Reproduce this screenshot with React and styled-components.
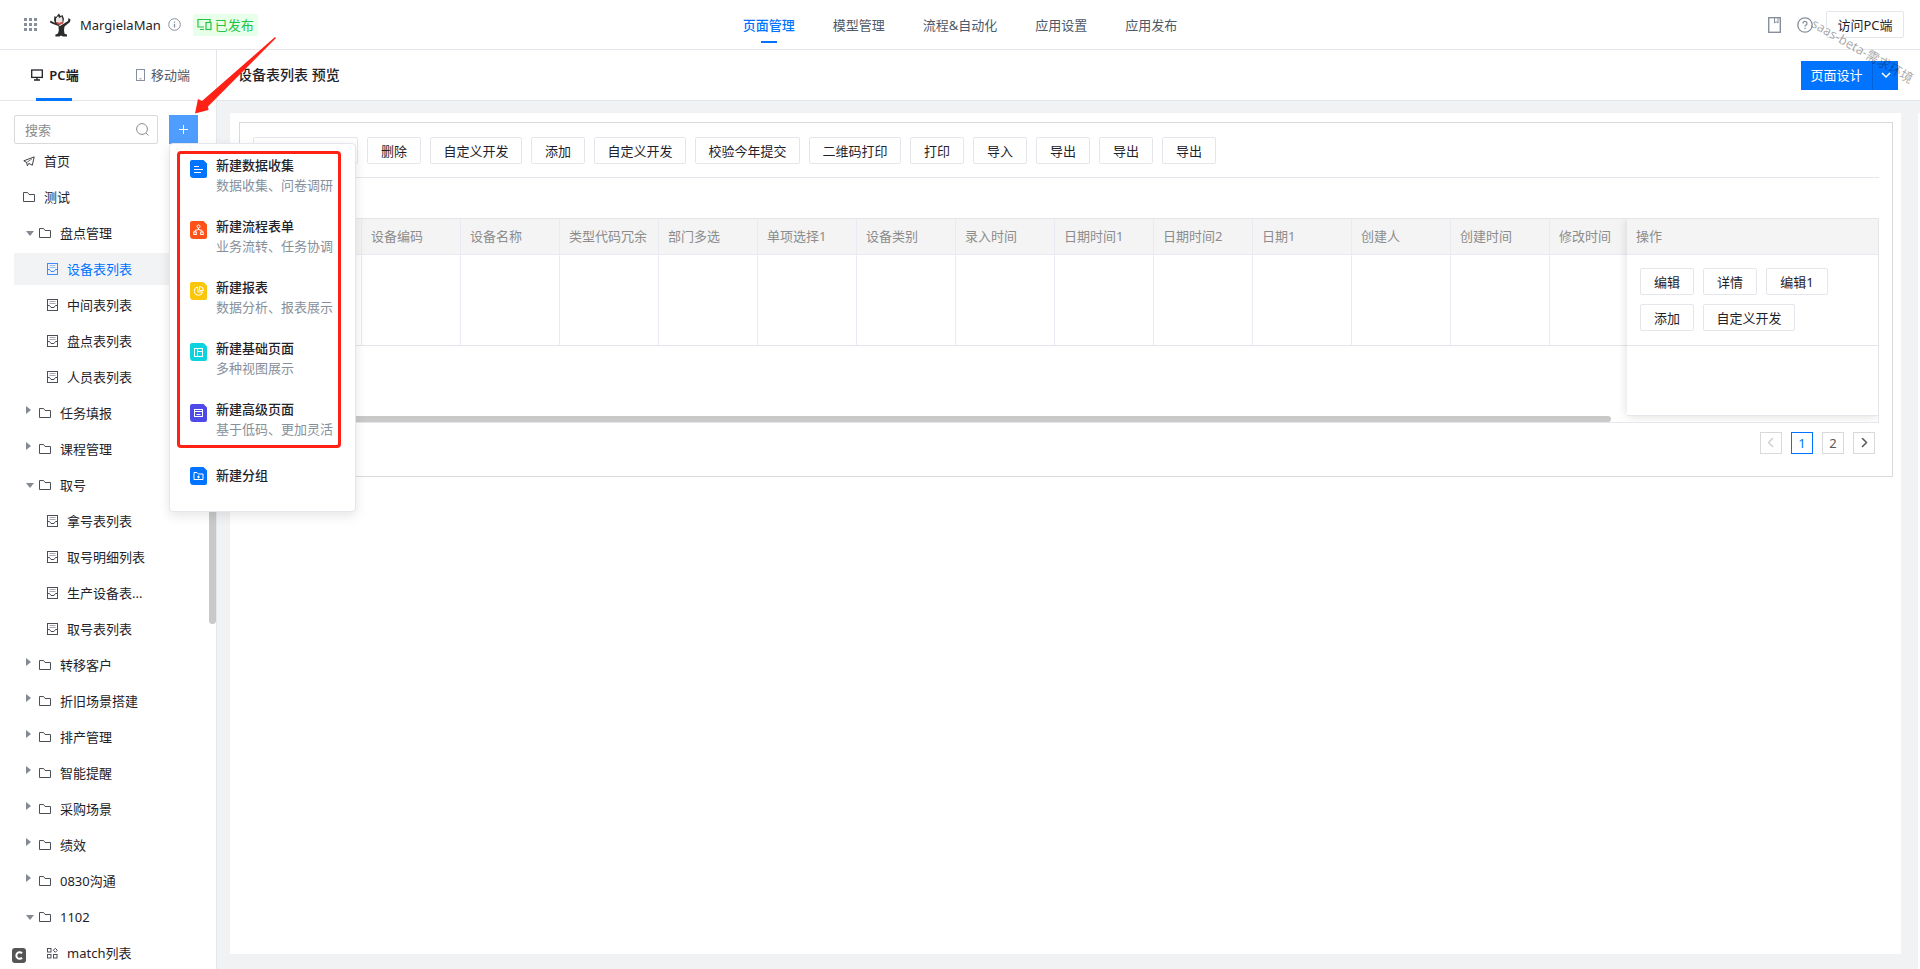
import React from 'react';
import styled, { createGlobalStyle, css } from 'styled-components';

const Global = createGlobalStyle`
  *, *::before, *::after { box-sizing: border-box; }
  body { margin: 0; }
  body, button, input {
    font-family: "Noto Sans", "Noto Sans CJK SC", sans-serif;
    font-size: 13px;
    line-height: 20px;
    color: #1f2329;
  }
  button { padding: 0; border: 0; background: none; cursor: pointer; }
  svg { display: block; flex: none; }
`;

const Page = styled.div`
  position: relative;
  display: flex;
  flex-direction: column;
  height: 100vh;
  overflow: hidden;
  background: #fff;
`;

/* top bar */
const Header = styled.header`
  display: grid;
  grid-template-columns: 1fr auto 1fr;
  flex: none;
  height: 50px;
  padding: 0 16px;
  border-bottom: 1px solid #e5e6eb;
`;
const Brand = styled.div`
  display: flex;
  align-items: center;
  padding-left: 8px;
`;
const LogoSlot = styled.span`
  margin-left: 13px;
`;
const AppName = styled.span`
  margin: 0 7px 0 9px;
`;
const Status = styled.span`
  display: flex;
  align-items: center;
  gap: 3px;
  height: 22px;
  margin-left: 12px;
  padding: 0 4px;
  border-radius: 2px;
  background: #e8ffea;
  color: #23c343;
`;
const Nav = styled.nav`
  display: flex;
  gap: 38px;
`;
const NavLink = styled.a`
  display: flex;
  flex-direction: column;
  align-items: center;
  padding-top: 15px;
  color: ${p => (p.$active ? '#0074ff' : '#4e5969')};
  font-weight: ${p => (p.$active ? 500 : 400)};
  text-decoration: none;
  ${p => p.$active && css`
    &::after { content: ''; width: 16px; height: 2px; margin-top: 6px; background: #0074ff; }
  `}
`;
const Actions = styled.div`
  display: flex;
  align-items: center;
  justify-content: flex-end;
`;
const IconButton = styled.button`
  margin-right: ${p => p.$gap}px;
`;
const Outline = styled.button`
  width: ${p => p.$w || 54}px;
  height: 27px;
  flex: none;
  border: 1px solid #e5e6eb;
  border-radius: 2px;
  background: #fff;
  white-space: nowrap;
`;
const Watermark = styled.span`
  position: absolute;
  top: 12px;
  left: calc(100% - 107px);
  transform: rotate(30deg);
  transform-origin: 0 50%;
  color: rgba(0, 0, 0, 0.36);
  white-space: nowrap;
  pointer-events: none;
`;

const Body = styled.div`
  display: flex;
  flex: 1;
  min-height: 0;
`;

/* side bar */
const Sidebar = styled.aside`
  position: relative;
  display: flex;
  flex-direction: column;
  flex: none;
  width: 217px;
  border-right: 1px solid #e5e6eb;
`;
const Tabs = styled.div`
  display: grid;
  grid-template-columns: 1fr 1fr;
  flex: none;
  height: 51px;
  border-bottom: 1px solid #e5e6eb;
`;
const Tab = styled.button`
  position: relative;
  display: flex;
  align-items: center;
  justify-content: center;
  gap: 6px;
  padding: 0 0 1px 2px;
  color: ${p => (p.$active ? '#1f2329' : '#4e5969')};
  font-weight: ${p => (p.$active ? 600 : 400)};
  ${p => p.$active && css`
    &::after { content: ''; position: absolute; left: 36px; bottom: -1px; width: 36px; height: 3px; background: #0074ff; }
  `}
`;
const Tools = styled.div`
  display: flex;
  gap: 11px;
  flex: none;
  padding: 14px 18px 1px 14px;
`;
const SearchBox = styled.label`
  display: flex;
  align-items: center;
  flex: 1;
  min-width: 0;
  height: 29px;
  padding: 0 8px 0 10px;
  border: 1px solid #d9d9d9;
  border-radius: 2px;
`;
const SearchInput = styled.input`
  flex: 1;
  min-width: 0;
  padding: 0;
  border: 0;
  outline: 0;
  &::placeholder { color: #8c8c8c; opacity: 1; }
`;
const AddButton = styled.button`
  display: flex;
  align-items: center;
  justify-content: center;
  width: 29px;
  height: 29px;
  background: #4e9dff;
`;
const Tree = styled.ul`
  display: flex;
  flex-direction: column;
  gap: 4px;
  flex: 1;
  min-height: 0;
  margin: 0;
  padding: 0 14px;
  overflow: hidden;
  list-style: none;
`;
const TreeLink = styled.a`
  display: flex;
  align-items: center;
  height: 32px;
  padding-left: ${p => [9, 12, 33][p.$level]}px;
  background: ${p => (p.$active ? '#f2f3f5' : 'none')};
  color: ${p => (p.$active ? '#0074ff' : '#1f2329')};
  text-decoration: none;
`;
const Caret = styled.i`
  width: 0;
  height: 0;
  flex: none;
  ${p => p.$open
    ? 'border: 4px solid transparent; border-top: 5px solid #858a92; border-bottom: 0; margin-right: 5px;'
    : 'border: 4px solid transparent; border-left: 5px solid #858a92; border-right: 0; margin: 0 8px 6px 0;'}
`;
const TreeText = styled.span`
  margin-left: 9px;
`;
const SideThumb = styled.div`
  position: absolute;
  top: 96px;
  right: 0;
  width: 7px;
  height: 478px;
  border-radius: 4px;
  background: #c9c9c9;
`;
const Badge = styled.div`
  position: absolute;
  left: 12px;
  bottom: 6px;
`;

/* drop-down under the add button */
const Menu = styled.div`
  position: absolute;
  top: 143px;
  left: 169px;
  z-index: 2;
  width: 187px;
  height: 369px;
  padding: 11px 0 0 20px;
  border: 1px solid #e5e6eb;
  border-radius: 4px;
  background: #fff;
  box-shadow: 0 4px 12px rgba(0, 0, 0, 0.1);
`;
const MenuItem = styled.button`
  display: flex;
  gap: 9px;
  height: ${p => (p.$single ? 32 : 61)}px;
  margin-top: ${p => (p.$single ? 5 : 0)}px;
  text-align: left;
  white-space: nowrap;
`;
const MenuIcon = styled.span`
  padding-top: ${p => (p.$single ? 2 : 5)}px;
`;
const MenuTitle = styled.span`
  display: block;
  font-weight: 500;
`;
const MenuNote = styled.span`
  display: block;
  color: #86909c;
`;
const Highlight = styled.div`
  position: absolute;
  top: 7px;
  left: 7px;
  width: 164px;
  height: 297px;
  border: 3px solid #ff2116;
  border-radius: 4px;
  pointer-events: none;
`;
const Arrow = styled.svg`
  position: absolute;
  top: 36px;
  left: 190px;
  z-index: 3;
  pointer-events: none;
`;

/* main area */
const Main = styled.main`
  display: flex;
  flex-direction: column;
  flex: 1;
  min-width: 0;
`;
const TitleBar = styled.div`
  display: flex;
  align-items: center;
  justify-content: space-between;
  flex: none;
  height: 51px;
  padding: 0 22px 0 21px;
  border-bottom: 1px solid #e5e6eb;
`;
const Title = styled.h1`
  margin: 0;
  font-size: 14px;
  font-weight: 500;
`;
const Split = styled.div`
  display: flex;
  height: 29px;
`;
const Primary = styled.button`
  display: flex;
  align-items: center;
  justify-content: center;
  width: ${p => p.$w}px;
  background: #0074ff;
  color: #fff;
  & + & { border-left: 1px solid #0062d9; }
`;
const Canvas = styled.div`
  display: flex;
  gap: 17px;
  flex: 1;
  padding: 12px 0 15px 13px;
  background: #f1f2f4;
`;
const Panel = styled.section`
  flex: 1;
  min-width: 0;
  padding: 9px 8px 9px 9px;
  background: #fff;
`;
const Edge = styled.div`
  width: 2px;
  margin-bottom: -15px;
  background: #fff;
`;
const Frame = styled.div`
  padding: 14px 13px 22px;
  border: 1px solid #d9d9d9;
`;
const Toolbar = styled.div`
  display: flex;
  gap: 9px;
  margin-bottom: 40px;
  padding-bottom: 13px;
  border-bottom: 1px solid #e5e6eb;
`;
const Grid = styled.div`
  position: relative;
  display: flex;
  height: 205px;
  border: 1px solid #e5e6eb;
  overflow: hidden;
`;
const Scroller = styled.div`
  flex: 1;
  min-width: 0;
  overflow: hidden;
`;
const Fixed = styled.div`
  position: relative;
  flex: none;
  width: 251px;
  height: 197px;
  background: #fff;
  border-bottom: 1px solid #e5e6eb;
  box-shadow: 0 0 10px rgba(0, 0, 0, 0.14);
`;
const Table = styled.table`
  width: ${p => p.$w};
  table-layout: fixed;
  border-collapse: separate;
  border-spacing: 0;
`;
const Th = styled.th`
  width: ${p => p.$w || 99}px;
  height: 36px;
  padding: 0 9px 1px;
  border-bottom: 1px solid #e9eaf2;
  border-right: ${p => (p.$last ? 0 : 1)}px solid #e9eaf2;
  background: #f4f4f4;
  color: #8c8c8c;
  font-weight: 400;
  text-align: left;
  white-space: nowrap;
`;
const Td = styled.td`
  height: 91px;
  padding: 13px 13px 0;
  border-bottom: 1px solid #e5e6eb;
  border-right: ${p => (p.$last ? 0 : 1)}px solid #e9eaf2;
  vertical-align: top;
`;
const RowActions = styled.div`
  display: flex;
  flex-wrap: wrap;
  gap: 9px;
`;
const ScrollThumb = styled.div`
  position: absolute;
  left: 0;
  right: 267px;
  bottom: 0;
  height: 6px;
  border-radius: 3px;
  background: #c9c9c9;
`;
const Pager = styled.nav`
  display: flex;
  justify-content: flex-end;
  gap: 9px;
  padding: 9px 4px 0 0;
`;
const PageButton = styled.button`
  display: flex;
  align-items: center;
  justify-content: center;
  width: 22px;
  height: 22px;
  border: 1px solid ${p => (p.$active ? '#0074ff' : '#d9d9d9')};
  color: ${p => (p.$active ? '#0074ff' : '#595959')};
`;

/* icons */
const Line = ({ w, h, children, color = 'currentColor', sw = 1 }) => (
  <svg width={w} height={h} viewBox={`0 0 ${w} ${h}`} fill="none" stroke={color} strokeWidth={sw}>{children}</svg>
);
const AppsIcon = () => (
  <svg width="13" height="13" fill="#86909c">
    {[0, 5, 10].map(y => [0, 5, 10].map(x => <rect key={x + '-' + y} x={x} y={y} width="3" height="3" />))}
  </svg>
);
const CatLogo = () => (
  <svg width="21" height="24" viewBox="0 0 21 24">
    <path d="M4.500 3 6 4l3-3.500L10.500 3l2-1 1.500 4-1 4-4 2-4-1.500L4 7z" fill="#2b2b2b" />
    <path d="M6 5.500 8 3l1.500 2 2-1.500L12.500 6v3l-3 1.500L6 9z" fill="#e9e6e4" />
    <path d="m5.500 9 4 .8L14 8.500l-1.500 2.300-3 1.200-2.500-1z" fill="#cf4a40" />
    <path d="M.5 7.500 3 9l4 1.800L10 13l4-2.500L18 8l.5-3 2 1.500L20 9l-5.500 4.500L14 17l.5 3.800 2.500.7v2h-4l-2-1-1.500 1H5.500l-.3-1.700L8 20.500l.8-3L8.500 13 3 11 0 9.500z" fill="#2b2b2b" />
  </svg>
);
const InfoIcon = () => <Line w={13} h={13} color="#86909c"><circle cx="6.5" cy="6.5" r="5.8" /><path d="M6.5 5.800v3.600M6.5 3.400v1.300" strokeWidth="1.300" /></Line>;
const ScreensIcon = () => (
  <Line w={15} h={13} sw={1.2}><path d="M7 9H1V1.500h12V4M3 11.500h4" /><rect x="9" y="4.500" width="5" height="7" /></Line>
);
const BookIcon = () => <Line w={13} h={16} color="#86909c" sw={1.4}><rect x=".7" y=".7" width="11.600" height="14.600" /><path d="M6.500 1v5l1.700-1.300L10 6V1" strokeWidth="1" /></Line>;
const HelpIcon = () => <Line w={16} h={16} color="#86909c" sw={1.3}><circle cx="8" cy="8" r="7.200" /><path d="M6 6.400a2 2 0 1 1 3 1.700c-.7.4-1 .7-1 1.500M8 10.800v1.200" /></Line>;
const MonitorIcon = () => <Line w={12} h={12} sw={1.3}><rect x=".7" y="1" width="10.600" height="7.400" /><path d="M6 8.500V11M3 11h6" /></Line>;
const PhoneIcon = () => <Line w={9} h={12} color="#86909c"><rect x=".5" y=".5" width="8" height="11" /><path d="M3.500 9.800h2" /></Line>;
const SearchIcon = () => <Line w={13} h={13} color="#8c8c8c"><circle cx="6" cy="6" r="5.400" /><path d="m10 10 2.500 2.500" /></Line>;
const PlusIcon = () => <Line w={9} h={9} color="#fff"><path d="M4.500 0v9M0 4.500h9" /></Line>;
const PlaneIcon = () => <Line w={12} h={11} color="#3c4148"><path d="M.8 4.800 11.200.9 9.300 9.200 5.800 7.400 4.400 9.800 3.600 6.400z" /><path d="M3.600 6.400 9 2.800" strokeWidth=".7" /></Line>;
const FolderIcon = () => <Line w={12} h={10} color="#4a4f57"><path d="M.5.5h4l1.500 2h5.500v7H.5z" /></Line>;
const PageIcon = ({ active }) => (
  <Line w={11} h={12} color={active ? '#3d8bff' : '#4a4f57'}>
    <rect x=".5" y=".5" width="10" height="11" />
    <path d="M2.500 2.500h6M2.500 4.500h6" opacity=".5" />
    <path d="M.5 6.500h2l1.500 2h3l1.500-2h2" />
  </Line>
);
const BlocksIcon = () => <Line w={11} h={11} color="#4a4f57"><rect x=".5" y=".5" width="3.500" height="3.500" /><rect x=".5" y="6.500" width="3.500" height="3.500" /><rect x="6.500" y="6.500" width="3.500" height="3.500" /><path d="m8.300.3 2 2-2 2-2-2z" /></Line>;
const Chevron = ({ d, color, sw = 1.5 }) => <Line w={10} h={10} color={color} sw={sw}><path d={d} /></Line>;

const Tile = ({ fill, children }) => (
  <svg width="17" height="18" viewBox="0 0 17 18" fill="none" stroke="#fff">
    <path d="M2 0h11.500L17 3.500V16a2 2 0 0 1-2 2H3.500a3.500 3.500 0 0 1-3.500-3.500V2a2 2 0 0 1 2-2z" fill={fill} stroke="none" />
    {children}
  </svg>
);
const tiles = {
  form: <Tile fill="#0074ff"><path d="M4 6.500h5M4 9.500h9M4 12.500h7" /></Tile>,
  flow: <Tile fill="#ff5219"><circle cx="8.500" cy="5.500" r="1.500" /><path d="M8.500 7v2M5 11V9.500l3.500-1L12 9.500V11" /><rect x="3.800" y="11" width="2.500" height="2.500" /><rect x="10.700" y="11" width="2.500" height="2.500" /></Tile>,
  chart: <Tile fill="#fac60a"><path d="M7.500 5a4.200 4.200 0 1 0 5 5H8z" /><path d="M9.500 4.500v4h4a4 4 0 0 0-4-4z" /></Tile>,
  layout: <Tile fill="#0cd3dc"><rect x="4.500" y="5.500" width="8" height="8" /><path d="M7.500 5.500v8M7.500 8.500h5" /></Tile>,
  code: <Tile fill="#4e49e8"><rect x="4.500" y="5.500" width="8" height="7" /><path d="M4.500 7.500h8M6.500 10.500h4" /></Tile>,
  group: <Tile fill="#0074ff"><path d="M4 5.500h3L8.500 7h4.500v5.500H4zM8.500 8.500v3M7 10h3" /></Tile>,
};

/* data */
const nav = ['页面管理', '模型管理', '流程&自动化', '应用设置', '应用发布'];
const tree = [
  [0, '首页', 'plane'], [0, '测试'],
  [1, '盘点管理', 'open'], [2, '设备表列表'], [2, '中间表列表'], [2, '盘点表列表'], [2, '人员表列表'],
  [1, '任务填报'], [1, '课程管理'],
  [1, '取号', 'open'], [2, '拿号表列表'], [2, '取号明细列表'], [2, '生产设备表...'], [2, '取号表列表'],
  [1, '转移客户'], [1, '折旧场景搭建'], [1, '排产管理'], [1, '智能提醒'], [1, '采购场景'], [1, '绩效'], [1, '0830沟通'],
  [1, '1102', 'open'], [2, 'match列表', 'blocks'],
];
const menu = [
  ['form', '新建数据收集', '数据收集、问卷调研'],
  ['flow', '新建流程表单', '业务流转、任务协调'],
  ['chart', '新建报表', '数据分析、报表展示'],
  ['layout', '新建基础页面', '多种视图展示'],
  ['code', '新建高级页面', '基于低码、更加灵活'],
  ['group', '新建分组'],
];
const toolbar = [
  ['', 105], ['删除', 54], ['自定义开发', 92], ['添加', 54], ['自定义开发', 92], ['校验今年提交', 105],
  ['二维码打印', 92], ['打印', 54], ['导入', 54], ['导出', 54], ['导出', 54], ['导出', 54],
];
const columns = ['设备编码', '设备名称', '类型代码冗余', '部门多选', '单项选择1', '设备类别', '录入时间', '日期时间1', '日期时间2', '日期1', '创建人', '创建时间', '修改时间'];
const rowActions = [['编辑', 54], ['详情', 54], ['编辑1', 62], ['添加', 54], ['自定义开发', 92]];

const TreeIcon = ({ level, kind, active }) => {
  if (kind === 'plane') return <PlaneIcon />;
  if (kind === 'blocks') return <BlocksIcon />;
  return level === 2 ? <PageIcon active={active} /> : <FolderIcon />;
};

export default function App() {
  return (
    <Page>
      <Global />
      <Header>
        <Brand>
          <AppsIcon />
          <LogoSlot><CatLogo /></LogoSlot>
          <AppName>MargielaMan</AppName>
          <InfoIcon />
          <Status><ScreensIcon />已发布</Status>
        </Brand>
        <Nav>{nav.map((n, i) => <NavLink key={n} href="#" $active={i === 0}>{n}</NavLink>)}</Nav>
        <Actions>
          <IconButton $gap={16} aria-label="文档"><BookIcon /></IconButton>
          <IconButton $gap={13} aria-label="帮助"><HelpIcon /></IconButton>
          <Outline $w={78}>访问PC端</Outline>
        </Actions>
      </Header>

      <Body>
        <Sidebar>
          <Tabs>
            <Tab $active><MonitorIcon />PC端</Tab>
            <Tab><PhoneIcon />移动端</Tab>
          </Tabs>
          <Tools>
            <SearchBox><SearchInput placeholder="搜索" aria-label="搜索" /><SearchIcon /></SearchBox>
            <AddButton aria-label="新建"><PlusIcon /></AddButton>
          </Tools>
          <Tree>
            {tree.map(([level, text, kind]) => {
              const active = text === '设备表列表';
              return (
                <li key={text}>
                  <TreeLink href="#" $level={level} $active={active}>
                    {level === 1 && <Caret $open={kind === 'open'} />}
                    <TreeIcon level={level} kind={kind} active={active} />
                    <TreeText>{text}</TreeText>
                  </TreeLink>
                </li>
              );
            })}
          </Tree>
          <SideThumb />
          <Badge>
            <svg width="14" height="15"><rect width="14" height="15" rx="3" fill="#555" /><path d="M10 5.200A3.300 3.300 0 1 0 10 9.800" fill="none" stroke="#fff" strokeWidth="2" /></svg>
          </Badge>
        </Sidebar>

        <Main>
          <TitleBar>
            <Title>设备表列表 预览</Title>
            <Split>
              <Primary $w={71}>页面设计</Primary>
              <Primary $w={26} aria-label="更多"><Chevron d="M1 3l4 4 4-4" color="#fff" /></Primary>
            </Split>
          </TitleBar>
          <Canvas>
            <Panel>
              <Frame>
                <Toolbar>{toolbar.map(([t, w], i) => <Outline key={i} $w={w} aria-label={t || '新增'}>{t}</Outline>)}</Toolbar>
                <Grid>
                  <Scroller>
                    <Table $w="1395px">
                      <thead><tr><Th $w={108} aria-label="序号" />{columns.map(c => <Th key={c}>{c}</Th>)}</tr></thead>
                      <tbody><tr><Td />{columns.map(c => <Td key={c} />)}</tr></tbody>
                    </Table>
                  </Scroller>
                  <Fixed>
                    <Table $w="100%">
                      <thead><tr><Th $w={251} $last>操作</Th></tr></thead>
                      <tbody><tr><Td $last><RowActions>{rowActions.map(([t, w]) => <Outline key={t} $w={w}>{t}</Outline>)}</RowActions></Td></tr></tbody>
                    </Table>
                  </Fixed>
                  <ScrollThumb />
                </Grid>
                <Pager aria-label="分页">
                  <PageButton aria-label="上一页"><Chevron d="M7 0 2.500 4.500 7 9" color="#d0d0d0" /></PageButton>
                  <PageButton $active>1</PageButton>
                  <PageButton>2</PageButton>
                  <PageButton aria-label="下一页"><Chevron d="M3 0 7.500 4.500 3 9" /></PageButton>
                </Pager>
              </Frame>
            </Panel>
            <Edge />
          </Canvas>
        </Main>
      </Body>

      <Menu>
        {menu.map(([icon, title, note]) => (
          <MenuItem key={title} $single={!note}>
            <MenuIcon $single={!note}>{tiles[icon]}</MenuIcon>
            <span><MenuTitle>{title}</MenuTitle>{note && <MenuNote>{note}</MenuNote>}</span>
          </MenuItem>
        ))}
        <Highlight />
      </Menu>
      <Arrow width="90" height="82"><path d="M85 1 86 2 18 70.500 18.500 74 5 77.500 8 63 12 65z" fill="#ff2116" /></Arrow>
      <Watermark>saas-beta-需求环境</Watermark>
    </Page>
  );
}
